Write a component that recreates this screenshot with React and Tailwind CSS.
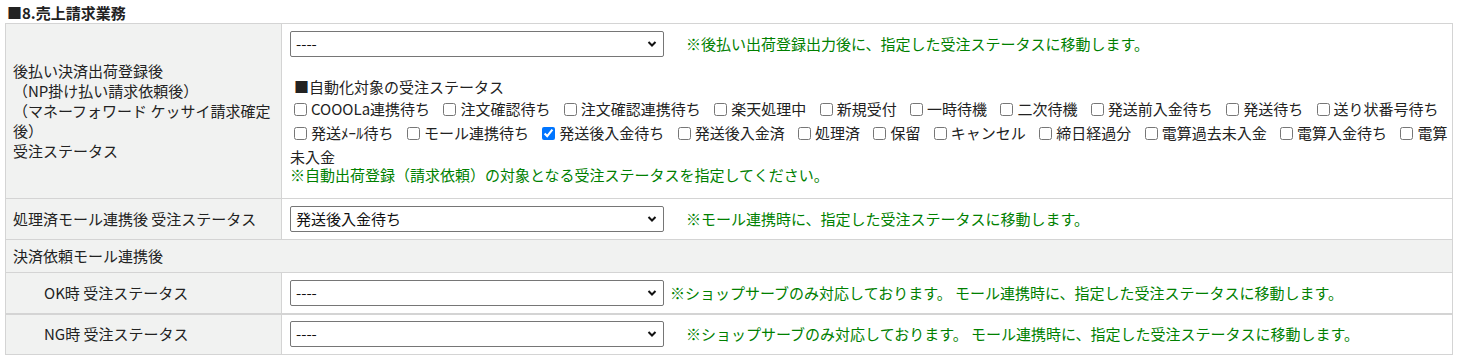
import { useState } from "react";

const STATUSES = [
  "COOOLa連携待ち",
  "注文確認待ち",
  "注文確認連携待ち",
  "楽天処理中",
  "新規受付",
  "一時待機",
  "二次待機",
  "発送前入金待ち",
  "発送待ち",
  "送り状番号待ち",
  "発送ﾒｰﾙ待ち",
  "モール連携待ち",
  "発送後入金待ち",
  "発送後入金済",
  "処理済",
  "保留",
  "キャンセル",
  "締日経過分",
  "電算過去未入金",
  "電算入金待ち",
  "電算未入金",
];

const StatusSelect = ({ value, onChange }) => (
  <div className="relative inline-block w-[374px] align-middle">
    <select
      value={value}
      onChange={(e) => onChange(e.target.value)}
      className="block w-full h-[26px] appearance-none rounded-[2px] border border-[#767676] bg-white pl-[5px] pr-6 text-[15px] leading-[24px] text-[#111]"
    >
      <option value="">----</option>
      {STATUSES.map((s) => (
        <option key={s} value={s}>
          {s}
        </option>
      ))}
    </select>
    <svg
      className="pointer-events-none absolute right-[7px] top-[9px]"
      width="10"
      height="8"
      viewBox="0 0 10 8"
    >
      <path d="M1.5 2 L5 5.5 L8.5 2" fill="none" stroke="#111" strokeWidth="2" />
    </svg>
  </div>
);

const Note = ({ children, className = "" }) => (
  <span className={`text-[#008000] align-middle ${className}`}>{children}</span>
);

export default function App() {
  const [form, setForm] = useState({
    afterPay: "",
    processed: "発送後入金待ち",
    ok: "",
    ng: "",
  });
  const [checked, setChecked] = useState({ 発送後入金待ち: true });

  const set = (key) => (v) => setForm((prev) => ({ ...prev, [key]: v }));

  const label = "bg-[#f1f2f1] border border-[#d4d4d4] pl-[7px] pr-2 align-middle";
  const cell = "bg-white border border-[#d4d4d4] pl-2 pr-2 align-middle";

  return (
    <div
      className="bg-white text-[15px] leading-[20px] text-[#222] px-[5px] pt-[3px]"
      style={{ fontFamily: '"Noto Sans CJK JP", "Noto Sans", sans-serif' }}
    >
      {/* TITLE */}
      <div className="font-bold h-[20px] leading-[20px] pl-[2px]">■8.売上請求業務</div>

      <table className="w-[1448px] border-collapse">
        <tbody>
          {/* ROW 1 */}
          <tr className="h-[174px]">
            <td className={`${label} w-[276px]`}>
              後払い決済出荷登録後
              <br />
              （NP掛け払い請求依頼後）
              <br />
              （マネーフォワード ケッサイ請求確定後）
              <br />
              受注ステータス
            </td>
            <td className="bg-white border border-[#d4d4d4] pl-2 pr-[1px] align-top pt-[7px] pb-[13px]">
              <div className="flex items-center">
                <StatusSelect value={form.afterPay} onChange={set("afterPay")} />
                <Note className="ml-[22px]">※後払い出荷登録出力後に、指定した受注ステータスに移動します。</Note>
              </div>
              <div className="mt-[20px] pl-[4px]">■自動化対象の受注ステータス</div>
              <div className="leading-[24px]">
                {STATUSES.map((s) => (
                  <label key={s}>
                    <input
                      type="checkbox"
                      className="ml-[4px] mr-[4px] align-[-1px] w-[13px] h-[13px]"
                      checked={!!checked[s]}
                      onChange={() => setChecked((prev) => ({ ...prev, [s]: !prev[s] }))}
                    />
                    {s}
                    <span className="pr-[6px]"> </span>
                  </label>
                ))}
              </div>
              <div className="text-[#008000] -mt-[4px]">※自動出荷登録（請求依頼）の対象となる受注ステータスを指定してください。</div>
            </td>
          </tr>

          {/* ROW 2 */}
          <tr className="h-[41px]">
            <td className={label}>処理済モール連携後 受注ステータス</td>
            <td className={cell}>
              <div className="flex items-center">
                <StatusSelect value={form.processed} onChange={set("processed")} />
                <Note className="ml-[22px]">※モール連携時に、指定した受注ステータスに移動します。</Note>
              </div>
            </td>
          </tr>

          {/* ROW 3 */}
          <tr className="h-[33px]">
            <td colSpan={2} className={label}>
              決済依頼モール連携後
            </td>
          </tr>

          {/* OK */}
          <tr className="h-[41px]">
            <td className={`${label} pl-[38px] border-b-2`}>OK時 受注ステータス</td>
            <td className={`${cell} border-b-2`}>
              <div className="flex items-center">
                <StatusSelect value={form.ok} onChange={set("ok")} />
                <Note className="ml-[6px]">※ショップサーブのみ対応しております。 モール連携時に、指定した受注ステータスに移動します。</Note>
              </div>
            </td>
          </tr>

          {/* NG */}
          <tr className="h-[41px]">
            <td className={`${label} pl-[38px]`}>NG時 受注ステータス</td>
            <td className={cell}>
              <div className="flex items-center">
                <StatusSelect value={form.ng} onChange={set("ng")} />
                <Note className="ml-[22px]">※ショップサーブのみ対応しております。 モール連携時に、指定した受注ステータスに移動します。</Note>
              </div>
            </td>
          </tr>
        </tbody>
      </table>
    </div>
  );
}
